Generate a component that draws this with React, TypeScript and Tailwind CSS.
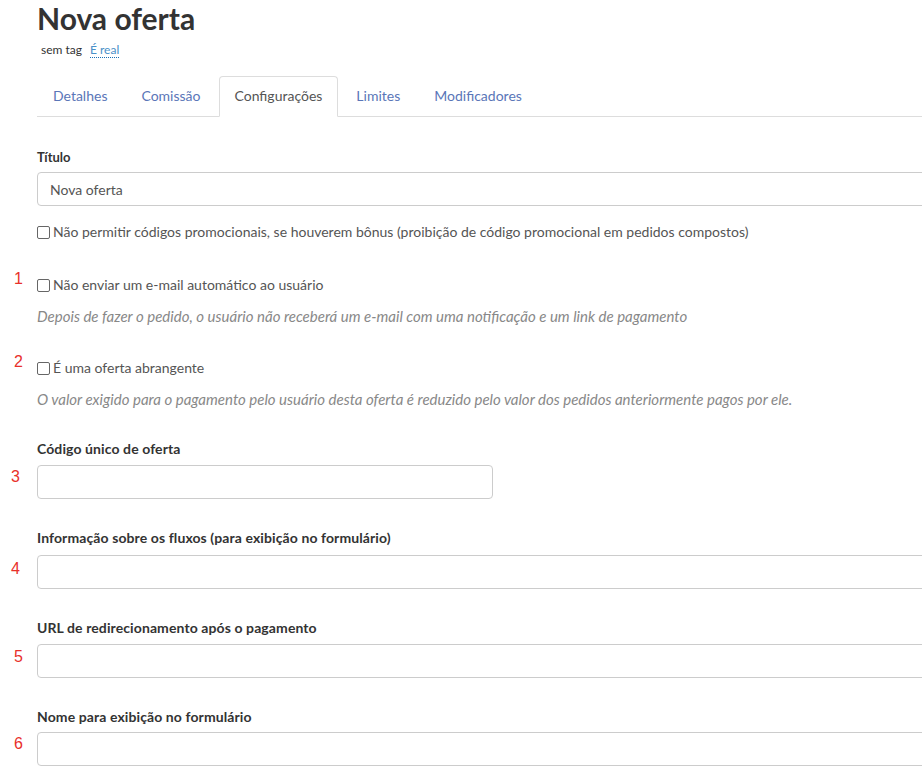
import React from 'react';

const tabs = ['Detalhes', 'Comissão', 'Configurações', 'Limites', 'Modificadores'];

const Gutter: React.FC<{ num?: string; className?: string }> = ({ num, className }) => (
  <div className="w-[37px] shrink-0 relative">
    {num && (
      <span
        className={`absolute left-[11px] font-['Liberation_Sans',sans-serif] text-[16px] leading-[20px] text-[#e8302a] ${className ?? ''}`}
      >
        {num}
      </span>
    )}
  </div>
);

const Checkbox: React.FC<{ label: string }> = ({ label }) => (
  <label className="flex items-center gap-[3px] text-[14px] leading-[20px] text-[#555]">
    <span className="w-[13px] h-[13px] border border-[#666] rounded-[2px] bg-white shrink-0" />
    {label}
  </label>
);

const Help: React.FC<{ children: React.ReactNode }> = ({ children }) => (
  <p className="text-[15px] leading-[20px] italic text-[#888]">{children}</p>
);

const FieldLabel: React.FC<{ children: React.ReactNode }> = ({ children }) => (
  <div className="text-[14px] leading-[20px] font-bold text-[#333] tracking-[0.1px]">{children}</div>
);

const TextInput: React.FC<{ value?: string; className?: string }> = ({ value, className }) => (
  <div
    className={`h-[34px] border border-[#ccc] rounded-[4px] bg-white px-[12px] flex items-center text-[14px] text-[#555] ${className ?? 'w-[960px]'}`}
  >
    {value}
  </div>
);

export default function App() {
  return (
    <div className="w-[922px] h-[783px] overflow-hidden bg-white font-['Lato',sans-serif] text-[#333]">
      <div className="w-[1000px]">
        <div className="pl-[37px]">
          <h1 className="text-[30px] leading-[36px] font-bold text-[#333]">Nova oferta</h1>
          <div className="mt-[6px] flex items-center gap-[8px] pl-[4px] text-[12px] leading-[16px]">
            <span className="text-[#333]">sem tag</span>
            <span className="text-[#4a90c8] border-b border-dotted border-[#1a6fb5] leading-[14px]">É real</span>
          </div>

          <div className="mt-[18px] flex border-b border-[#ddd] h-[41px]">
            {tabs.map((t) => {
              const active = t === 'Configurações';
              return (
                <div
                  key={t}
                  className={`mr-[2px] -mb-px px-[15px] pb-[3px] flex items-center text-[14px] rounded-t-[4px] border ${
                    active
                      ? 'border-[#ddd] border-b-white bg-white text-[#555]'
                      : 'border-transparent text-[#5a76b8]'
                  }`}
                >
                  {t}
                </div>
              );
            })}
          </div>
        </div>

        <div className="flex mt-[31px]">
          <Gutter />
          <div className="flex-1">
            <div className="text-[13px] leading-[18px] font-bold text-[#333]">Título</div>
            <TextInput value="Nova oferta" className="mt-[6px] w-[960px]" />
            <div className="mt-[16px]">
              <Checkbox label="Não permitir códigos promocionais, se houverem bônus (proibição de código promocional em pedidos compostos)" />
            </div>
          </div>
        </div>

        <div className="flex mt-[33px]">
          <Gutter num="1" className="-top-[6px] left-[14px]" />
          <div className="flex-1">
            <Checkbox label="Não enviar um e-mail automático ao usuário" />
            <div className="mt-[11px]">
              <Help>Depois de fazer o pedido, o usuário não receberá um e-mail com uma notificação e um link de pagamento</Help>
            </div>
          </div>
        </div>

        <div className="flex mt-[32px]">
          <Gutter num="2" className="-top-[6px] left-[14px]" />
          <div className="flex-1">
            <Checkbox label="É uma oferta abrangente" />
            <div className="mt-[11px]">
              <Help>O valor exigido para o pagamento pelo usuário desta oferta é reduzido pelo valor dos pedidos anteriormente pagos por ele.</Help>
            </div>
          </div>
        </div>

        <div className="flex mt-[30px]">
          <Gutter />
          <FieldLabel>Código único de oferta</FieldLabel>
        </div>
        <div className="flex mt-[6px]">
          <Gutter num="3" className="top-[2px]" />
          <TextInput className="w-[456px]" />
        </div>

        <div className="flex mt-[29px]">
          <Gutter />
          <FieldLabel>Informação sobre os fluxos (para exibição no formulário)</FieldLabel>
        </div>
        <div className="flex mt-[7px]">
          <Gutter num="4" className="top-[4px]" />
          <TextInput />
        </div>

        <div className="flex mt-[29px]">
          <Gutter />
          <FieldLabel>URL de redirecionamento após o pagamento</FieldLabel>
        </div>
        <div className="flex mt-[6px]">
          <Gutter num="5" className="top-[3px] left-[14px]" />
          <TextInput />
        </div>

        <div className="flex mt-[29px]">
          <Gutter />
          <FieldLabel>Nome para exibição no formulário</FieldLabel>
        </div>
        <div className="flex mt-[5px]">
          <Gutter num="6" className="top-[2px] left-[14px]" />
          <TextInput />
        </div>
      </div>
    </div>
  );
}
